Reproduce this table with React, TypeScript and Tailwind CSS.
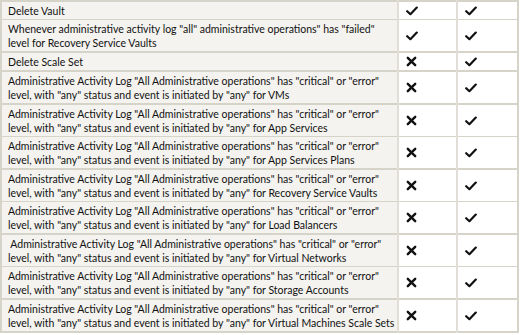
import React from "react"

type Row = { lines: string[]; a: boolean; b: boolean; thick?: boolean }

const L1 = 'Administrative Activity Log "All Administrative operations" has "critical" or "error"'
const L2 = 'level, with "any" status and event is initiated by "any" for '

const rows: Row[] = [
  { lines: ["Delete Vault"], a: true, b: true },
  {
    lines: [
      'Whenever administrative activity log "all" administrative operations" has "failed"',
      "level for Recovery Service Vaults",
    ],
    a: true,
    b: true,
    thick: true,
  },
  { lines: ["Delete Scale Set"], a: false, b: true, thick: true },
  { lines: [L1, L2 + "VMs"], a: false, b: true, thick: true },
  { lines: [L1, L2 + "App Services"], a: false, b: true },
  { lines: [L1, L2 + "App Services Plans"], a: false, b: true, thick: true },
  { lines: [L1, L2 + "Recovery Service Vaults"], a: false, b: true },
  { lines: [L1, L2 + "Load Balancers"], a: false, b: true, thick: true },
  { lines: ["\u00a0" + L1, L2 + "Virtual Networks"], a: false, b: true },
  { lines: [L1, L2 + "Storage Accounts"], a: false, b: true, thick: true },
  { lines: [L1, L2 + "Virtual Machines Scale Sets"], a: false, b: true, thick: true },
]

function Check() {
  return (
    <svg width="12" height="10" viewBox="0 0 12 10" className="block">
      <path d="M1.2 5.2 L4.4 8.2 L10.8 1.6" fill="none" stroke="#111" strokeWidth="2.2" strokeLinecap="round" strokeLinejoin="round" />
    </svg>
  )
}

function Cross() {
  return (
    <svg width="11" height="11" viewBox="0 0 11 11" className="block">
      <path d="M1.8 1.8 L9.2 9.2 M9.2 1.8 L1.8 9.2" fill="none" stroke="#111" strokeWidth="2.4" strokeLinecap="round" />
    </svg>
  )
}

export default function App() {
  return (
    <div className="w-[521px] h-[335px] bg-white overflow-hidden" style={{ fontFamily: 'Lato, sans-serif' }}>
      <table className="w-[519px] table-fixed border-collapse border-2 border-[#d6d3c9] text-[10.5px] leading-[14px] text-[#111]">
        <colgroup>
          <col className="w-[397px]" />
          <col className="w-[59px]" />
          <col />
        </colgroup>
        <tbody>
          {rows.map((r, i) => (
            <tr key={i} className={r.thick ? "border-b-2 border-[#d6d3c9]" : "border-b border-[#d6d3c9]"}>
              <td className="bg-[#f4f3ef] pl-[6px] pt-[2px] pb-[1px] align-middle border-r-2 border-[#e0ded6] whitespace-nowrap">
                {r.lines.map((l, j) => (
                  <div key={j}>{l}</div>
                ))}
              </td>
              <td className="pl-[7px] align-middle border-r-2 border-[#e0ded6]">
                {r.a ? <Check /> : <Cross />}
              </td>
              <td className="pl-[7px] align-middle">{r.b ? <Check /> : <Cross />}</td>
            </tr>
          ))}
        </tbody>
      </table>
    </div>
  )
}
